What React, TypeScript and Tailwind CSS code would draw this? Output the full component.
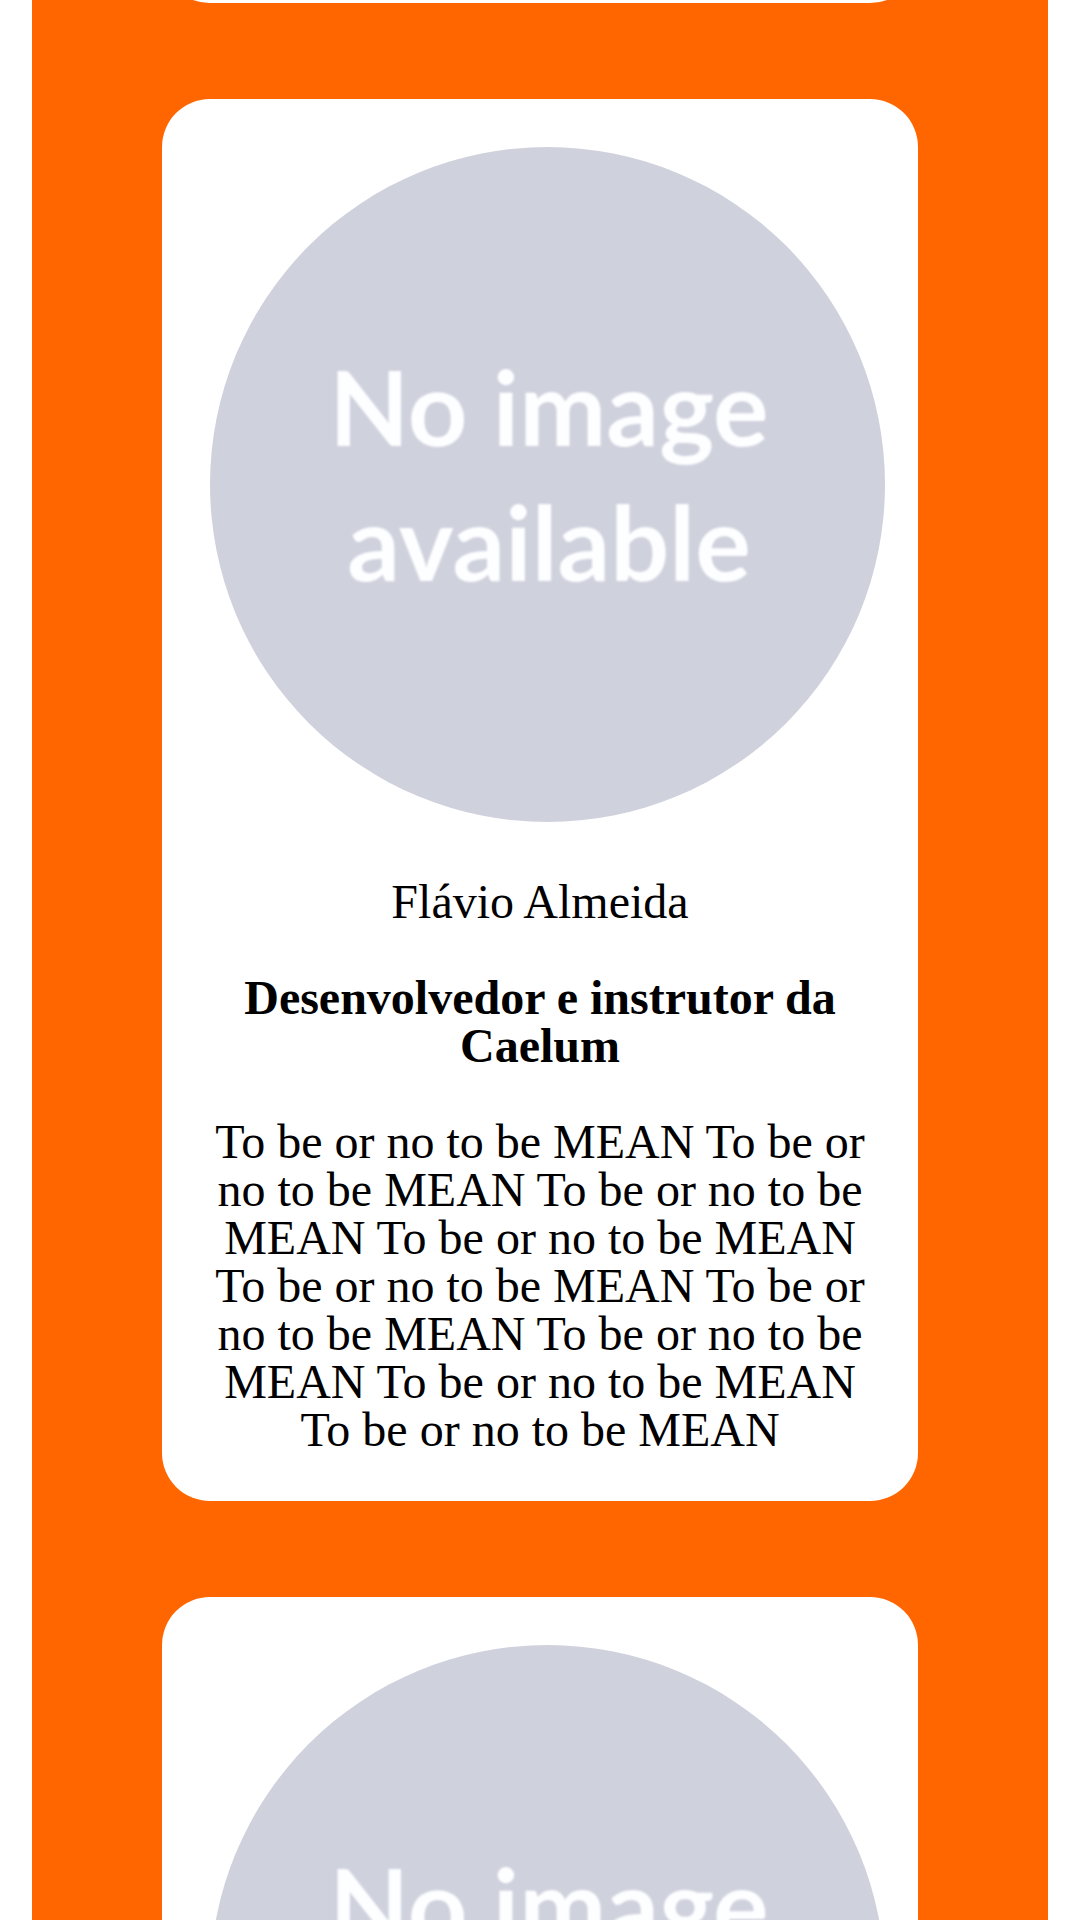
import React from "react";

type Speaker = {
  name: string;
  role: string;
  bio: string;
};

const speaker: Speaker = {
  name: "Flávio Almeida",
  role: "Desenvolvedor e instrutor da Caelum",
  bio: Array(9).fill("To be or no to be MEAN").join(" "),
};

function Portrait() {
  return (
    <svg
      viewBox="0 0 675 675"
      role="img"
      aria-label="No image available"
      className="block w-[675px] max-w-none shrink-0 rounded-full bg-[#cfd1dd]"
    >
      <g
        fill="#fdfeff"
        textAnchor="middle"
        className="font-['Lato',sans-serif] text-[104px] font-bold blur-[1px]"
      >
        <text x="339" y="299">No image</text>
        <text x="339" y="434">available</text>
      </g>
    </svg>
  );
}

function Card({ children }: { children?: React.ReactNode }) {
  return (
    <article className="mx-auto w-[70vw] shrink-0 rounded-[48px] bg-white px-12 pt-12 pb-[47px] text-center">
      {children}
    </article>
  );
}

export default function App() {
  return (
    <main className="h-screen overflow-hidden bg-white px-8 font-['Liberation_Serif',serif] text-[48px] leading-[48px] text-black">
      <section className="flex min-h-full flex-col gap-24 bg-[#ff6600]">
        <div className="flex h-[3px] shrink-0 flex-col justify-end overflow-hidden">
          <Card />
        </div>
        <Card>
          <Portrait />
          <h2 className="mt-14">{speaker.name}</h2>
          <p className="mt-12 font-bold">{speaker.role}</p>
          <p className="mt-12">{speaker.bio}</p>
        </Card>
        <Card>
          <Portrait />
        </Card>
      </section>
    </main>
  );
}
